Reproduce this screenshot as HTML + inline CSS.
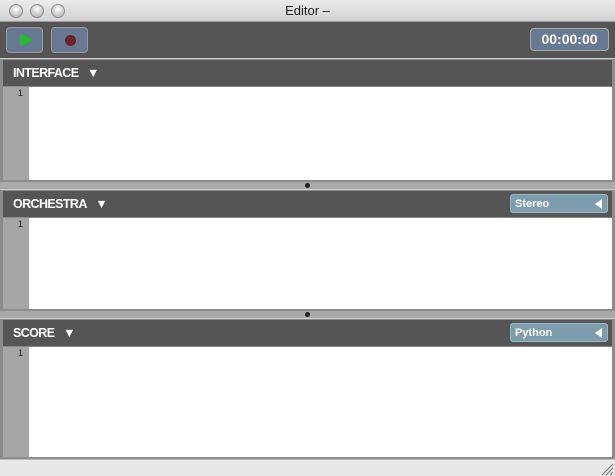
<!DOCTYPE html><html><head><style>
body{margin:0;width:615px;height:476px;overflow:hidden;background:#a9a9a9;font-family:"Liberation Sans",sans-serif;position:relative}
div{position:absolute;box-sizing:border-box}
.title{left:0;top:0;width:615px;height:22px;background:linear-gradient(#ececec,#d2d2d2);border-bottom:1px solid #999;text-align:center;font-size:13px;line-height:22px;color:#222}
.tl{top:4px;width:14px;height:14px;border-radius:50%;background:radial-gradient(circle at 50% 35%,#fff,#c8c8c8 60%,#a8a8a8);border:1px solid #8f8f8f}
.tb{left:0;top:22px;width:615px;height:36px;background:#555}
.btn{top:27px;width:37px;height:26px;background:#687a93;border:1px solid #999;border-radius:4px}
.hdr{left:3px;width:609px;height:26px;background:#555;color:#fff;font-weight:bold;font-size:12.5px;line-height:26px;padding-left:10px;letter-spacing:-0.6px}
.ed{left:3px;width:609px;background:#fff;border-top:1px solid #888}
.gut{left:0;top:0;bottom:0;width:26px;background:#a6a6a6;font-size:9px;text-align:right;padding-right:6px;line-height:12px;color:#222}
.dd{right:7px;width:98px;height:19px;background:#7c9dad;border:1px solid #9bb;border-radius:3px;color:#fff;font-size:11px;font-weight:bold;line-height:18px;padding-left:4px}
.dd:after{content:"";position:absolute;right:5px;top:4px;border-right:7px solid #fff;border-top:5px solid transparent;border-bottom:5px solid transparent}
.frame{left:0;width:615px;background:#8c8c8c;border-top:1px solid #ccc}
.knob{left:305px;width:5px;height:5px;background:#222;border-radius:50%}
</style></head><body>
<div class="title">Editor –</div>
<div class="tl" style="left:9px"></div><div class="tl" style="left:30px"></div><div class="tl" style="left:51px"></div>
<div class="tb"></div>
<div class="btn" style="left:6px"><div style="left:13px;top:6px;border-left:13px solid #1fc21f;border-top:6.5px solid transparent;border-bottom:6.5px solid transparent"></div></div>
<div class="btn" style="left:51px"><div style="left:13px;top:7px;width:11px;height:11px;border-radius:50%;background:#6b2525"></div></div>
<div style="left:530px;top:28px;width:79px;height:23px;background:#687a93;border:1px solid #aaa;border-radius:4px;color:#fff;font-weight:bold;font-size:14px;text-align:center;line-height:21px">00:00:00</div>

<div class="frame" style="top:58px;height:124px"></div>
<div class="hdr" style="top:60px">INTERFACE&nbsp;&nbsp;&nbsp;▼</div>
<div class="ed" style="top:86px;height:94px"><div class="gut">1</div></div>
<div class="knob" style="top:183px"></div>

<div class="frame" style="top:189px;height:122px"></div>
<div class="hdr" style="top:191px">ORCHESTRA&nbsp;&nbsp;&nbsp;▼</div>
<div class="dd" style="top:194px">Stereo</div>
<div class="ed" style="top:217px;height:92px"><div class="gut">1</div></div>
<div class="knob" style="top:312px"></div>

<div class="frame" style="top:318px;height:141px"></div>
<div class="hdr" style="top:320px">SCORE&nbsp;&nbsp;&nbsp;▼</div>
<div class="dd" style="top:323px">Python</div>
<div class="ed" style="top:346px;height:111px"><div class="gut">1</div></div>

<div style="left:0;top:459px;width:615px;height:17px;background:#e8e8e8;border-top:1px solid #bbb"></div>
<svg style="position:absolute;left:600px;top:462px" width="14" height="14"><path d="M2 13L13 2M6 13L13 6M10 13L13 10" stroke="#777" stroke-width="1"/></svg>
</body></html>
